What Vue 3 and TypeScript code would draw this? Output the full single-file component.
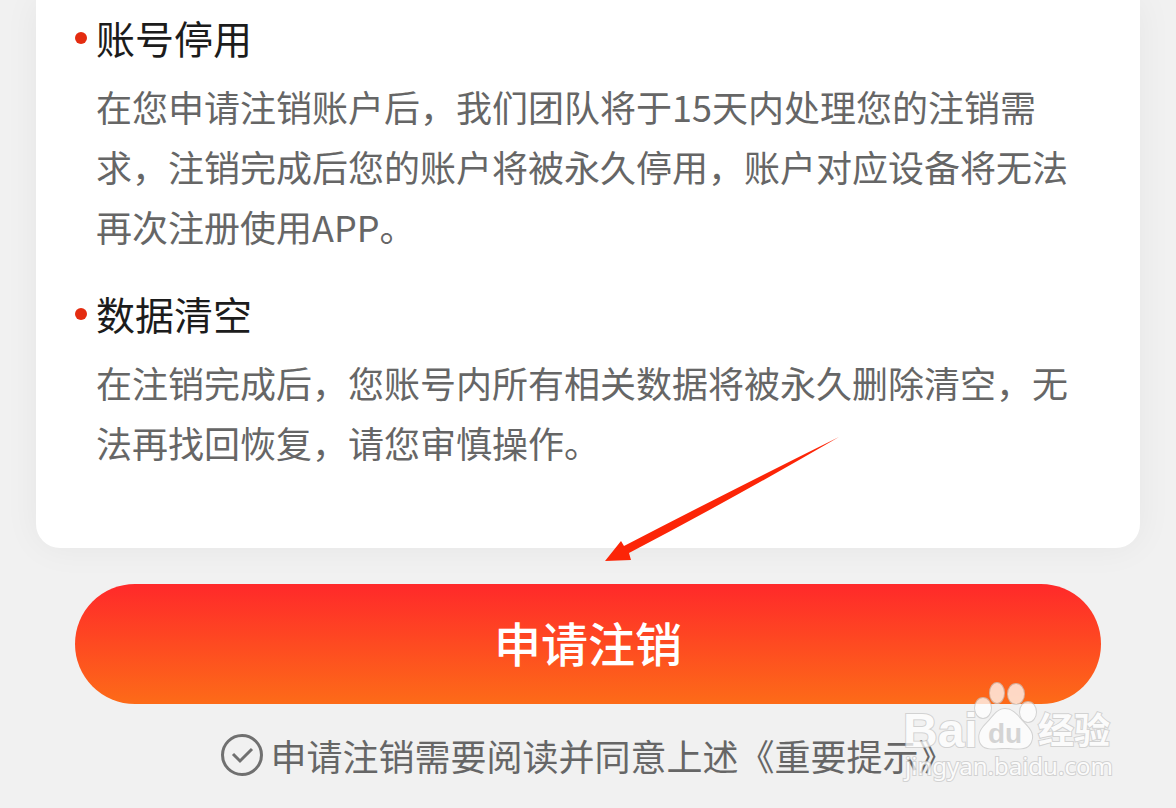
<script setup lang="ts">
import { ref } from 'vue'

interface Notice {
  title: string
  body: string
}

const notices: Notice[] = [
  {
    title: '账号停用',
    body: '在您申请注销账户后，我们团队将于15天内处理您的注销需求，注销完成后您的账户将被永久停用，账户对应设备将无法再次注册使用APP。',
  },
  {
    title: '数据清空',
    body: '在注销完成后，您账号内所有相关数据将被永久删除清空，无法再找回恢复，请您审慎操作。',
  },
]

const agreed = ref<boolean>(true)
</script>

<template>
  <main class="page">
    <section class="card">
      <article v-for="notice in notices" :key="notice.title" class="notice">
        <h2 class="title">{{ notice.title }}</h2>
        <p class="body">{{ notice.body }}</p>
      </article>
      <svg class="arrow" viewBox="0 0 236 128" aria-hidden="true">
        <path d="M235 1 Q130 62 25 117 L27 124 L1 125 L17 105 L20 110 Q128 54 235 1 Z" />
      </svg>
    </section>

    <button class="submit" type="button">申请注销</button>

    <div class="agree">
      <span class="tick">
        <input id="agree" v-model="agreed" type="checkbox" />
        <svg v-if="agreed" viewBox="0 0 42 42" aria-hidden="true">
          <path d="M12 20 L19 27 L31 15" />
        </svg>
      </span>
      <label for="agree">申请注销需要阅读并同意上述<a href="#notice">《重要提示》</a></label>
    </div>

    <svg class="watermark" viewBox="0 0 220 104" role="img" aria-label="Baidu 经验">
      <g class="mark">
        <ellipse cx="83" cy="28" rx="8" ry="10" />
        <ellipse cx="97" cy="13" rx="7" ry="10" />
        <ellipse cx="116" cy="14" rx="8" ry="10" />
        <ellipse cx="128" cy="32" rx="8" ry="10" />
        <path d="M105 29 C114 29 118 37 124 43 C131 50 134 55 131 62 C127 71 117 68 105 68 C94 68 84 71 80 62 C78 55 80 50 87 43 C93 37 97 29 105 29 Z" />
        <text class="latin" x="3" y="67">Bai</text>
        <text class="cjk" x="138" y="64">经验</text>
        <text class="url" x="5" y="95">jingyan.baidu.com</text>
      </g>
      <text class="du" x="88" y="63">du</text>
    </svg>
  </main>
</template>

<style>
body {
  margin: 0;
  background: #f1f1f1;
}
</style>

<style scoped>
.page {
  position: relative;
  box-sizing: border-box;
  min-height: 100vh;
  padding: 0 36px 20px;
  overflow: hidden;
  background: #f1f1f1;
  color: #666;
  font-family: "Noto Sans CJK SC", sans-serif;
  font-size: 36px;
  line-height: 60px;
}

.card {
  position: relative;
  padding: 7px 60px 76px;
  border-radius: 0 0 24px 24px;
  background: #fff;
  box-shadow: 0 0 36px rgba(0, 0, 0, 0.05);
}

.notice + .notice {
  margin-top: 27px;
}

.title {
  position: relative;
  margin: 0;
  color: #1c1c1c;
  font-size: 39px;
  font-weight: 400;
}

.title::before {
  content: "";
  position: absolute;
  top: 25px;
  left: -21px;
  width: 12px;
  height: 12px;
  border-radius: 50%;
  background: #e42c10;
}

.body {
  margin: 9px 0 0;
}

.arrow {
  position: absolute;
  right: 300px;
  bottom: -16px;
  width: 236px;
  height: 128px;
  fill: #fc2507;
}

.submit {
  display: block;
  width: calc(100% - 78px);
  height: 120px;
  margin: 36px auto 0;
  padding: 0 0 5px;
  border: 0;
  border-radius: 60px;
  background: linear-gradient(#ff292a, #fd6b18);
  color: #fff;
  font-family: inherit;
  font-size: 47px;
  font-weight: 500;
}

.agree {
  display: flex;
  align-items: center;
  justify-content: center;
  gap: 7px;
  margin-top: 21px;
}

.tick {
  display: grid;
  width: 42px;
  height: 42px;
}

.tick > * {
  grid-area: 1 / 1;
}

.tick input {
  box-sizing: border-box;
  width: 42px;
  height: 42px;
  margin: 0;
  border: 3px solid #707070;
  border-radius: 50%;
  appearance: none;
}

.tick svg {
  width: 42px;
  height: 42px;
  pointer-events: none;
}

.tick path {
  fill: none;
  stroke: #707070;
  stroke-width: 3;
}

.agree a {
  color: inherit;
  text-decoration: none;
}

.watermark {
  position: absolute;
  right: 56px;
  bottom: 24px;
  width: 220px;
  height: 104px;
  pointer-events: none;
}

.mark {
  fill: #fff;
  stroke: #c8c8c8;
  stroke-width: 2px;
  paint-order: stroke;
  opacity: 0.75;
}

.latin {
  font: 700 48px "Liberation Sans", sans-serif;
}

.cjk {
  font: 700 36px "Noto Sans CJK SC", sans-serif;
}

.url {
  font: 400 24px "Noto Sans", sans-serif;
}

.du {
  fill: #d4d4d4;
  font: 700 28px "Liberation Sans", sans-serif;
}
</style>
